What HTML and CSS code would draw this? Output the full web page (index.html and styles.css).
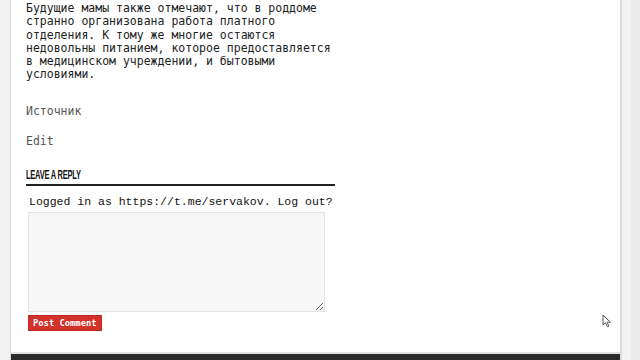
FILE: index.html
```html
<!DOCTYPE html>
<html lang="ru">
<head>
    <meta charset="UTF-8">
    <meta name="viewport" content="width=device-width, initial-scale=1.0">
    <title>Комментарии</title>
    <link rel="stylesheet" href="styles.css">
</head>
<body>
    <div class="wrap">
        <div class="page">
            <div class="content">
                <p class="lead">Будущие мамы также отмечают, что в роддоме странно организована работа платного отделения. К тому же многие остаются недовольны питанием, которое предоставляется в медицинском учреждении, и бытовыми условиями.</p>
                <p class="meta">Источник</p>
                <p class="meta edit">Edit</p>

                <div class="reply">
                    <h3 class="reply-title"><span>Leave a Reply</span></h3>
                    <p class="logged">Logged in as https://t.me/servakov. Log out?</p>
                    <form class="reply-form">
                        <textarea class="comment-box" name="comment"></textarea>
                        <button type="submit" class="submit">Post Comment</button>
                    </form>
                </div>
            </div>
            <div class="footer"></div>
        </div>
        <div class="side"></div>
    </div>
    <svg class="cursor" width="10" height="14" viewBox="0 0 10 14">
        <path d="M1 1 L1 11 L3.5 8.7 L5.4 12.8 L6.9 12.1 L5.1 8.2 L8.4 8.2 Z" fill="#fff" stroke="#555" stroke-width="1"/>
    </svg>
</body>
</html>
```

FILE: styles.css
```css
body {
    margin: 0;
    background: #f1f1f1;
    color: #222;
    font-family: "DejaVu Sans Mono", "Liberation Mono", monospace;
    height: 360px;
    overflow: hidden;
}
.wrap {
    display: flex;
    height: 360px;
    padding-left: 10px;
}
.page {
    width: 609px;
    background: #fff;
    border-left: 1px solid #d9d9d9;
    border-right: 2px solid #dcdcdc;
    display: flex;
    flex-direction: column;
}
.content {
    flex: 1;
    padding: 2px 0 0 15px;
}
.side {
    width: 9px;
    background: #f3f3f3;
    border-right: 9px solid #ebebeb;
}
.lead {
    width: 310px;
    margin: 0 0 23px;
    font-size: 11.5px;
    line-height: 13.3px;
}
.meta {
    margin: 0 0 17px;
    font-size: 11.5px;
    line-height: 13.3px;
    color: #555;
}
.edit {
    margin-bottom: 20px;
}
.reply {
    width: 309px;
}
.reply-title {
    margin: 0;
    padding-bottom: 2px;
    border-bottom: 2px solid #222;
    font-family: "Liberation Sans Narrow", "Liberation Sans", sans-serif;
    font-weight: bold;
    font-size: 12.5px;
    line-height: 14px;
    text-transform: uppercase;
    letter-spacing: -0.4px;
    color: #111;
}
.reply-title span {
    display: inline-block;
    transform: scaleX(0.6);
    transform-origin: left center;
}
.logged {
    margin: 9px 0 3px 3px;
    font-family: "Liberation Mono", monospace;
    font-size: 11.5px;
    line-height: 14px;
    white-space: nowrap;
    color: #111;
}
.reply-form {
    padding-left: 2px;
}
.comment-box {
    display: block;
    box-sizing: border-box;
    width: 297px;
    height: 100px;
    margin: 0 0 3px;
    background: #f7f7f7;
    border: 1px solid #e4e4e4;
    border-radius: 0;
}
.submit {
    display: block;
    padding: 0 4px;
    height: 16px;
    background: #d2322b;
    color: #fff;
    border: 1px solid #c02820;
    font-family: "DejaVu Sans Mono", monospace;
    font-weight: bold;
    font-size: 8.8px;
    line-height: 14px;
    cursor: pointer;
}
.footer {
    height: 6px;
    background: #2b2b2b;
    border-top: 2px solid #e2e2e2;
}
.cursor {
    position: absolute;
    left: 602px;
    top: 314px;
}
```
